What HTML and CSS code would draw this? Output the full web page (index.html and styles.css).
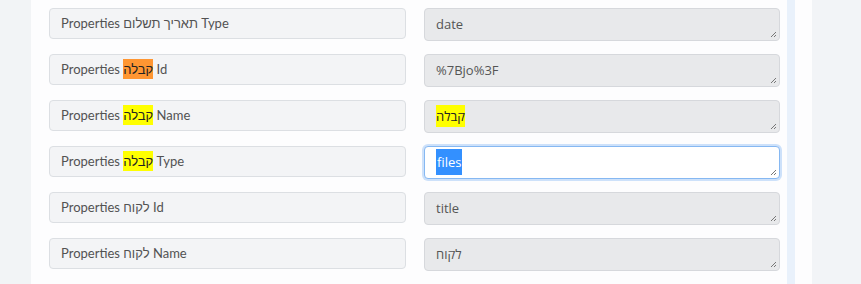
FILE: index.html
```html
<!DOCTYPE html>
<html lang="en">
<head>
    <meta charset="UTF-8">
    <title>Field Mapping</title>
    <link rel="stylesheet" href="styles.css">
</head>
<body>
    <div class="page">
        <div class="gutter"></div>

        <div class="panel">
            <div class="mapping-list">
                <!-- row 1 -->
                <div class="map-label">Properties תאריך תשלום Type</div>
                <div class="map-field">date<svg class="grip" viewBox="0 0 8 8"><path d="M7 2 L2 7 M7 5 L5 7"/></svg></div>

                <!-- row 2 -->
                <div class="map-label">Properties <span class="hit current">קבלה</span> Id</div>
                <div class="map-field">%7Bjo%3F<svg class="grip" viewBox="0 0 8 8"><path d="M7 2 L2 7 M7 5 L5 7"/></svg></div>

                <!-- row 3 -->
                <div class="map-label">Properties <span class="hit">קבלה</span> Name</div>
                <div class="map-field"><span class="hit">קבלה</span><svg class="grip" viewBox="0 0 8 8"><path d="M7 2 L2 7 M7 5 L5 7"/></svg></div>

                <!-- row 4 -->
                <div class="map-label">Properties <span class="hit">קבלה</span> Type</div>
                <div class="map-field focused"><span class="selected">files</span><svg class="grip" viewBox="0 0 8 8"><path d="M7 2 L2 7 M7 5 L5 7"/></svg></div>

                <!-- row 5 -->
                <div class="map-label">Properties לקוח Id</div>
                <div class="map-field">title<svg class="grip" viewBox="0 0 8 8"><path d="M7 2 L2 7 M7 5 L5 7"/></svg></div>

                <!-- row 6 -->
                <div class="map-label">Properties לקוח Name</div>
                <div class="map-field">לקוח<svg class="grip" viewBox="0 0 8 8"><path d="M7 2 L2 7 M7 5 L5 7"/></svg></div>
            </div>
        </div>

        <div class="scroll-edge"></div>
        <div class="aside-gap"></div>
        <div class="aside"></div>
    </div>
</body>
</html>
```

FILE: styles.css
```css
body {
    margin: 0;
    padding: 0;
    background-color: #f2f4f6;
    font-family: Lato, "Noto Sans", sans-serif;
    overflow: hidden;
}

.page {
    display: flex;
    height: 284px;
}

.gutter {
    width: 31px;
    background-color: #f2f4f6;
}

.panel {
    width: 756px;
    box-sizing: border-box;
    padding: 8px 7px 0 18px;
    background-color: #fdfdfe;
}

.scroll-edge {
    width: 8px;
    background-color: #e9f1fb;
}

.aside-gap {
    width: 17px;
    background-color: #fdfdfe;
}

.aside {
    flex: 1;
    background-color: #f2f4f7;
}

.mapping-list {
    display: grid;
    grid-template-columns: 357px 356px;
    column-gap: 18px;
    row-gap: 13px;
    align-items: start;
}

.map-label {
    height: 31px;
    box-sizing: border-box;
    border: 1px solid #dcdfe3;
    border-radius: 4px;
    background-color: #f3f4f6;
    padding: 0 11px;
    line-height: 29px;
    font-size: 13px;
    color: #525252;
    white-space: nowrap;
}

.map-field {
    position: relative;
    height: 33px;
    box-sizing: border-box;
    border: 1px solid #d6d8dc;
    border-radius: 4px;
    background-color: #e8e9eb;
    padding: 0 11px;
    line-height: 31px;
    font-family: "Open Sans", "Noto Sans", sans-serif;
    font-size: 13px;
    color: #555;
    white-space: nowrap;
}

.map-field.focused {
    background-color: #fff;
    border-color: #86b8f2;
    box-shadow: 0 0 0 2px #cde1fa;
}

.grip {
    position: absolute;
    right: 2px;
    bottom: 2px;
    width: 8px;
    height: 8px;
    stroke: #777;
    stroke-width: 1;
    fill: none;
}

.hit {
    background-color: #ffff00;
    color: #222;
    padding: 2px 0;
}

.hit.current {
    background-color: #ff9632;
}

.selected {
    background-color: #3390ff;
    color: #fff;
    padding: 4px 1px;
}
```
